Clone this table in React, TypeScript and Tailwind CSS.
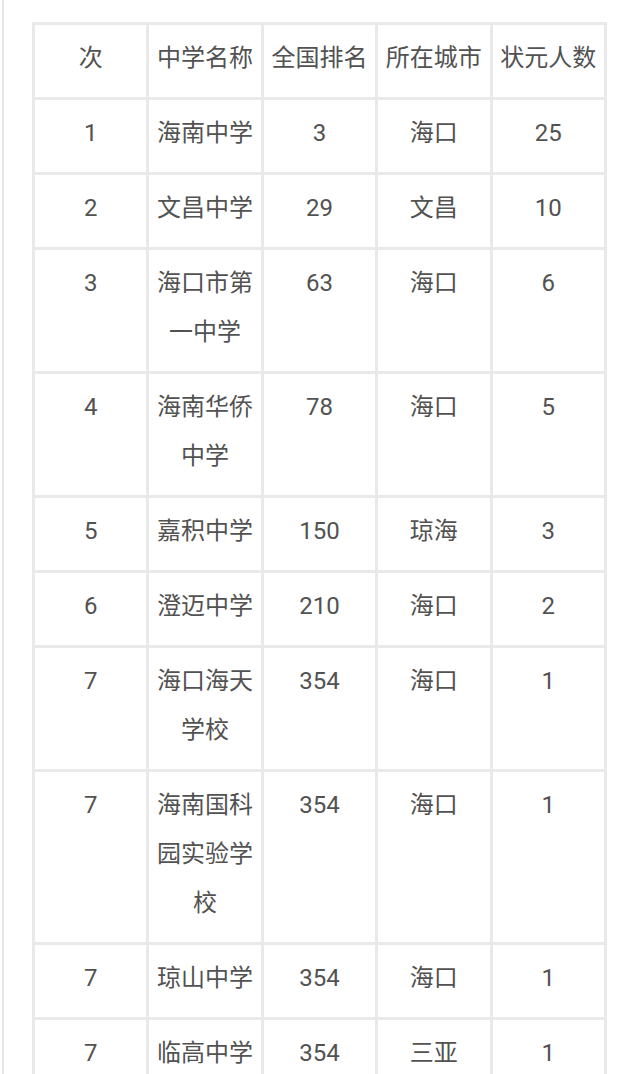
import React from 'react';

const rows: [string, string, string, string, string][] = [
  ['1', '海南中学', '3', '海口', '25'],
  ['2', '文昌中学', '29', '文昌', '10'],
  ['3', '海口市第一中学', '63', '海口', '6'],
  ['4', '海南华侨中学', '78', '海口', '5'],
  ['5', '嘉积中学', '150', '琼海', '3'],
  ['6', '澄迈中学', '210', '海口', '2'],
  ['7', '海口海天学校', '354', '海口', '1'],
  ['7', '海南国科园实验学校', '354', '海口', '1'],
  ['7', '琼山中学', '354', '海口', '1'],
  ['7', '临高中学', '354', '三亚', '1'],
];

const headers = ['次', '中学名称', '全国排名', '所在城市', '状元人数'];

const cell =
  'border-[3px] border-[#e9e9e9] align-top text-center pt-[9px] pb-[14px] px-0 font-normal';

export default function App() {
  return (
    <div
      className="min-h-screen bg-white ml-[2px] border-l-2 border-[#e6e6e6] pt-[22px] pl-[28px] text-[24px] leading-[49px] text-[#525252]"
      style={{ fontFamily: 'Roboto, "Noto Sans CJK SC", sans-serif' }}
    >
      <table className="table-fixed border-collapse w-[575px]">
        <thead>
          <tr>
            {headers.map((h) => (
              <th key={h} className={cell}>
                {h}
              </th>
            ))}
          </tr>
        </thead>
        <tbody>
          {rows.map((r, i) => (
            <tr key={i}>
              {r.map((c, j) => (
                <td key={j} className={cell}>
                  {c}
                </td>
              ))}
            </tr>
          ))}
        </tbody>
      </table>
    </div>
  );
}
